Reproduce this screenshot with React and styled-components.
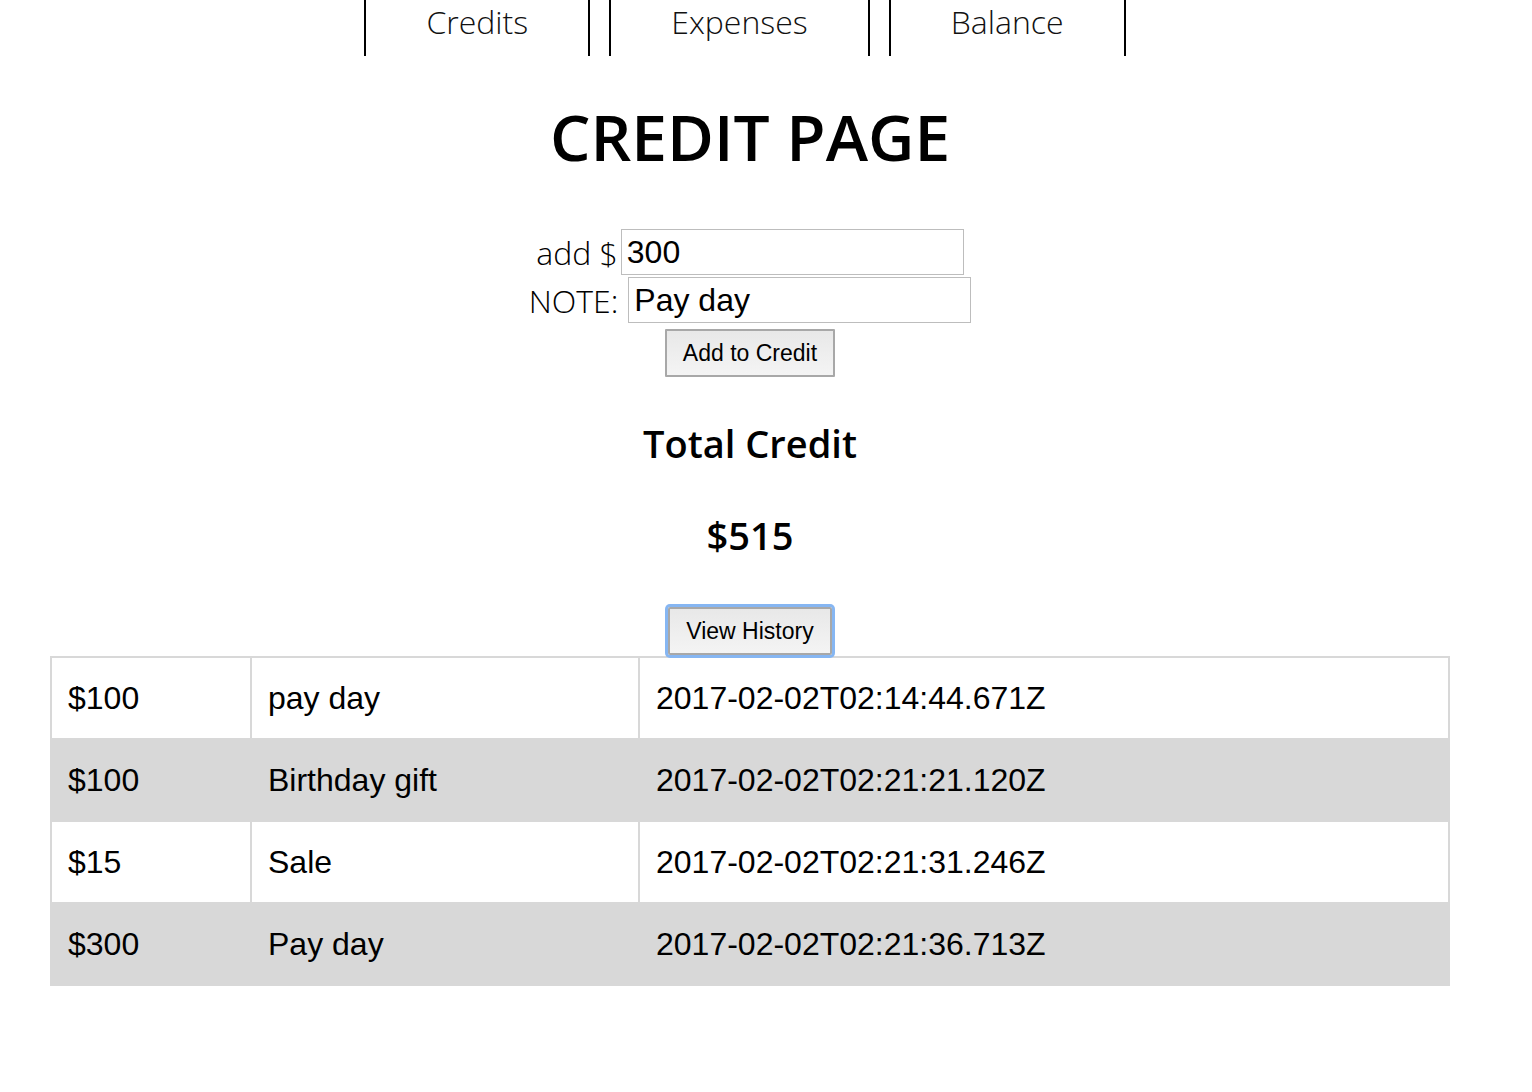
import React, { useState } from "react";
import styled, { createGlobalStyle } from "styled-components";

const GlobalStyle = createGlobalStyle`
  body {
    margin: 0;
    background: #ffffff;
    color: #000000;
    font-family: "Open Sans", sans-serif;
  }
`;

const Page = styled.div`
  width: 1500px;
  display: flex;
  flex-direction: column;
  align-items: center;
`;

const Nav = styled.nav`
  display: flex;
  gap: 19px;
  padding-right: 10px;
`;

const Tab = styled.a`
  height: 56px;
  padding: 0 60px;
  border-left: 2px solid #000;
  border-right: 2px solid #000;
  font-size: 32px;
  font-weight: 300;
  color: #111;
  text-decoration: none;
  cursor: pointer;
`;

const Title = styled.h1`
  margin: 37px 0 49px;
  font-size: 64px;
  font-weight: 600;
`;

const Form = styled.form`
  display: flex;
  flex-direction: column;
  align-items: center;
  gap: 2px;
`;

const Field = styled.div`
  display: flex;
  align-items: center;
  height: 46px;
`;

const Label = styled.label`
  font-size: 32px;
  font-weight: 300;
  margin-right: ${({ $gap }) => $gap}px;
`;

const Input = styled.input`
  box-sizing: border-box;
  width: 343px;
  height: 46px;
  padding: 0 5px;
  border: 1px solid #bdbdbd;
  font-family: "Liberation Sans", Arial, sans-serif;
  font-size: 32px;
  color: #000;
  outline: none;
`;

const Button = styled.button`
  box-sizing: border-box;
  height: 48px;
  padding: 0 16px;
  border: 2px solid #a8a8a8;
  background: linear-gradient(#e8e8e8, #f4f4f4);
  font-family: "Liberation Sans", Arial, sans-serif;
  font-size: 23px;
  color: #000;
  cursor: pointer;
  box-shadow: ${({ $focus }) => ($focus ? "0 0 0 3px #86b6f2" : "none")};
  border-radius: ${({ $focus }) => ($focus ? "2px" : "1px")};
`;

const SubmitRow = styled.div`
  display: flex;
  margin-top: 4px;
`;

const TotalLabel = styled.h3`
  margin: 40px 0 0;
  font-size: 38px;
  font-weight: 600;
`;

const TotalValue = styled.h3`
  margin: 40px 0 46px;
  font-size: 38px;
  font-weight: 600;
`;

const HistoryWrap = styled.div`
  display: flex;
  position: relative;
  z-index: 1;
  margin-bottom: 1px;
`;

const Table = styled.table`
  width: 1400px;
  border-collapse: collapse;
  font-family: "Liberation Sans", Arial, sans-serif;
  font-size: 32px;
  table-layout: fixed;
`;

const Row = styled.tr`
  &:nth-child(even) {
    background: #d8d8d8;
  }
`;

const Cell = styled.td`
  height: 82px;
  padding: 0 16px;
  border: 2px solid #d8d8d8;
  vertical-align: middle;
  width: ${({ $w }) => ($w ? `${$w}px` : "auto")};
  box-sizing: border-box;
`;

const history = [
  { amount: 100, note: "pay day", date: "2017-02-02T02:14:44.671Z" },
  { amount: 100, note: "Birthday gift", date: "2017-02-02T02:21:21.120Z" },
  { amount: 15, note: "Sale", date: "2017-02-02T02:21:31.246Z" },
  { amount: 300, note: "Pay day", date: "2017-02-02T02:21:36.713Z" },
];

export default function App() {
  const [amount, setAmount] = useState("300");
  const [note, setNote] = useState("Pay day");

  return (
    <>
      <GlobalStyle />
      <Page>
        <Nav>
          <Tab>Credits</Tab>
          <Tab>Expenses</Tab>
          <Tab>Balance</Tab>
        </Nav>

        <Title>CREDIT PAGE</Title>

        <Form onSubmit={(e) => e.preventDefault()}>
          <Field>
            <Label $gap={3}>add $</Label>
            <Input value={amount} onChange={(e) => setAmount(e.target.value)} />
          </Field>
          <Field>
            <Label $gap={10}>NOTE:</Label>
            <Input value={note} onChange={(e) => setNote(e.target.value)} />
          </Field>
          <SubmitRow>
            <Button type="submit">Add to Credit</Button>
          </SubmitRow>
        </Form>

        <TotalLabel>Total Credit</TotalLabel>
        <TotalValue>$515</TotalValue>

        <HistoryWrap>
          <Button $focus>View History</Button>
        </HistoryWrap>

        <Table>
          <tbody>
            {history.map((h, i) => (
              <Row key={i}>
                <Cell $w={200}>${h.amount}</Cell>
                <Cell $w={388}>{h.note}</Cell>
                <Cell>{h.date}</Cell>
              </Row>
            ))}
          </tbody>
        </Table>
      </Page>
    </>
  );
}
